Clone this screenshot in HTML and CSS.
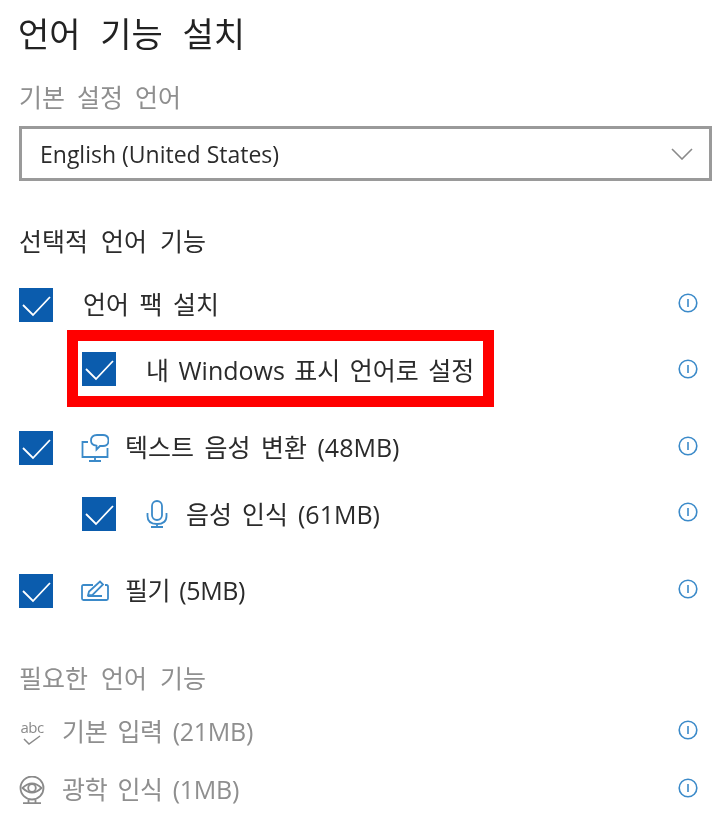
FILE: index.html
```html
<!DOCTYPE html>
<html lang="ko">
<head>
<meta charset="utf-8">
<title>언어 기능 설치</title>
<link rel="stylesheet" href="styles.css">
</head>
<body>
<main class="page">
  <h1 class="title">언어 기능 설치</h1>
  <div class="field-label">기본 설정 언어</div>
  <div class="select">
    <span class="select-value">English (United States)</span>
    <svg class="chevron" viewBox="0 0 22 12"><path d="M1 1l10 10L21 1"/></svg>
  </div>
  <h2 class="section">선택적 언어 기능</h2>

  <div class="row row-a">
    <span class="check"><svg viewBox="0 0 34 34"><path d="M4 17l10 10L31 9"/></svg></span>
    <span class="text t-pack">언어 팩 설치</span>
    <svg class="info" viewBox="0 0 20 20"><use href="#i"/></svg>
  </div>

  <div class="row row-b">
    <div class="highlight">
      <span class="check"><svg viewBox="0 0 34 34"><path d="M4 17l10 10L31 9"/></svg></span>
      <span class="text t-display">내 Windows 표시 언어로 설정</span>
    </div>
    <svg class="info" viewBox="0 0 20 20"><use href="#i"/></svg>
  </div>

  <div class="row row-c">
    <span class="check"><svg viewBox="0 0 34 34"><path d="M4 17l10 10L31 9"/></svg></span>
    <svg class="icon icon-speech" viewBox="0 0 28 28">
      <path d="M7 8H1.500v15h25v-9M14 23v4M8 27h12"/>
      <path d="M10 6.500Q10 1 16 1h6q5.500 0 5.500 5.500T22 12h-3l-3.500 3.500v-3.800Q10 11 10 6.500z"/>
    </svg>
    <span class="text t-tts">텍스트 음성 변환 (48MB)</span>
    <svg class="info" viewBox="0 0 20 20"><use href="#i"/></svg>
  </div>

  <div class="row row-d">
    <span class="check"><svg viewBox="0 0 34 34"><path d="M4 17l10 10L31 9"/></svg></span>
    <svg class="icon icon-mic" viewBox="0 0 22 28">
      <rect x="6" y="1" width="10" height="19" rx="5"/>
      <path d="M1.500 13v3q0 8 9.500 8t9.500-8v-3M11 24v3M5 27h12"/>
    </svg>
    <span class="text t-stt">음성 인식 (61MB)</span>
    <svg class="info" viewBox="0 0 20 20"><use href="#i"/></svg>
  </div>

  <div class="row row-e">
    <span class="check"><svg viewBox="0 0 34 34"><path d="M4 17l10 10L31 9"/></svg></span>
    <svg class="icon icon-pen" viewBox="0 0 28 22">
      <path d="M12 5H2.500Q1 5 1 6.500v12Q1 20 2.500 20h23q1.500 0 1.500-1.500v-12Q27 5 25.500 5H24"/>
      <path d="M7 15.500l1-4L19 1.500l3 3L11.500 15zM7 16h14"/>
    </svg>
    <span class="text t-hand">필기 (5MB)</span>
    <svg class="info" viewBox="0 0 20 20"><use href="#i"/></svg>
  </div>

  <h2 class="section muted section-req">필요한 언어 기능</h2>

  <div class="row row-f">
    <span class="abc-icon"><span class="abc">abc</span><svg viewBox="0 0 18 10"><path d="M1 4l5 5L17 1"/></svg></span>
    <span class="text muted t-req">기본 입력 (21MB)</span>
    <svg class="info" viewBox="0 0 20 20"><use href="#i"/></svg>
  </div>

  <div class="row row-g">
    <svg class="icon icon-cam" viewBox="0 0 26 28">
      <circle cx="13" cy="12" r="11.500"/>
      <circle cx="13" cy="12" r="3.800"/>
      <path d="M3.500 12Q13 3 22.500 12Q13 21 3.500 12zM9.500 24v3M16.500 24v3M4 27.200h18"/>
    </svg>
    <span class="text muted t-req">광학 인식 (1MB)</span>
    <svg class="info" viewBox="0 0 20 20"><use href="#i"/></svg>
  </div>
</main>
<svg class="defs" width="0" height="0">
  <defs>
    <g id="i">
      <circle cx="10" cy="10" r="8.800" fill="none" stroke="#3b8ac9" stroke-width="1.600"/>
      <path d="M10 6v8" stroke="#3b8ac9" stroke-width="1.600" fill="none"/>
    </g>
  </defs>
</svg>
</body>
</html>
```
FILE: styles.css
```css
* { box-sizing: border-box; }
html, body { margin: 0; background: #fff; }
body {
  width: 719px;
  height: 831px;
  overflow: hidden;
  font-family: "Open Sans", "Noto Sans CJK KR", sans-serif;
  color: #2b2b2b;
}
.page {
  padding: 0 7px 0 19px;
  filter: blur(0.6px);
}
.title {
  margin: 0 0 0 -1px;
  height: 68px;
  font-size: 34px;
  font-weight: 400;
  line-height: 68px;
  word-spacing: 10.8px;
  color: #222;
}
.field-label {
  height: 58px;
  font-size: 25px;
  line-height: 58px;
  word-spacing: 5.5px;
  color: #8f8f8f;
}
.select {
  display: flex;
  align-items: center;
  justify-content: space-between;
  height: 55px;
  padding: 0 16px 0 18px;
  border: 3px solid #9a9a9a;
}
.select-value { font-size: 23px; color: #2b2b2b; }
.chevron { width: 22px; height: 12px; fill: none; stroke: #8a8a8a; stroke-width: 1.6; }
.section {
  margin: 37px 0 0;
  height: 47px;
  font-size: 25px;
  font-weight: 400;
  line-height: 46px;
  word-spacing: 6.5px;
  color: #2b2b2b;
}
.section-req { height: 46px; margin-top: 47px; color: #8f8f8f; }
.muted { color: #8f8f8f; }
.row { display: flex; align-items: center; }
.row-a { height: 34px; margin-top: 23px; }
.row-b { height: 77px; margin-top: 8px; margin-left: 48px; }
.row-c { height: 34px; margin-top: 24px; }
.row-d { height: 34px; margin-top: 32px; margin-left: 63px; }
.row-e { height: 34px; margin-top: 43px; }
.row-f { height: 34px; margin-top: 14px; }
.row-g { height: 34px; margin-top: 24px; }
.highlight {
  display: flex;
  align-items: center;
  width: 427px;
  height: 77px;
  padding-left: 4px;
  border: 11px solid #f00;
}
.check {
  flex: none;
  width: 34px;
  height: 34px;
  background: #0b5cad;
}
.check svg { display: block; width: 34px; height: 34px; fill: none; stroke: #fff; stroke-width: 1.800; }
.text {
  margin-bottom: 4px;
  font-size: 25px;
  word-spacing: 4px;
  white-space: nowrap;
}
.t-pack { margin-left: 30px; }
.t-display { margin: 0 0 0 30px; word-spacing: 3px; }
.t-tts { margin-left: 16px; }
.t-stt { margin-left: 18px; margin-bottom: 2px; word-spacing: 3.500px; }
.t-hand { margin-left: 16px; word-spacing: 3px; letter-spacing: -0.4px; }
.t-req { margin-left: 17px; word-spacing: 3.800px; letter-spacing: -0.3px; }
.icon { flex: none; fill: none; stroke: #3b8ac9; stroke-width: 1.800; }
.icon-speech { width: 28px; height: 28px; margin-left: 28px; }
.icon-mic { width: 22px; height: 28px; margin-left: 30px; }
.icon-pen { width: 28px; height: 22px; margin-left: 28px; }
.icon-cam { width: 26px; height: 28px; stroke: #8a8a8a; }
.abc-icon { display: flex; flex-direction: column; align-items: center; width: 26px; }
.abc { font-size: 15px; line-height: 14px; color: #8a8a8a; letter-spacing: -0.5px; }
.abc-icon svg { width: 18px; height: 10px; margin-top: 1px; fill: none; stroke: #8a8a8a; stroke-width: 1.500; }
.info { flex: none; width: 20px; height: 20px; margin: 0 14px 4px auto; }
.row-b .info { margin-bottom: 0; }
.defs { position: absolute; }
```
